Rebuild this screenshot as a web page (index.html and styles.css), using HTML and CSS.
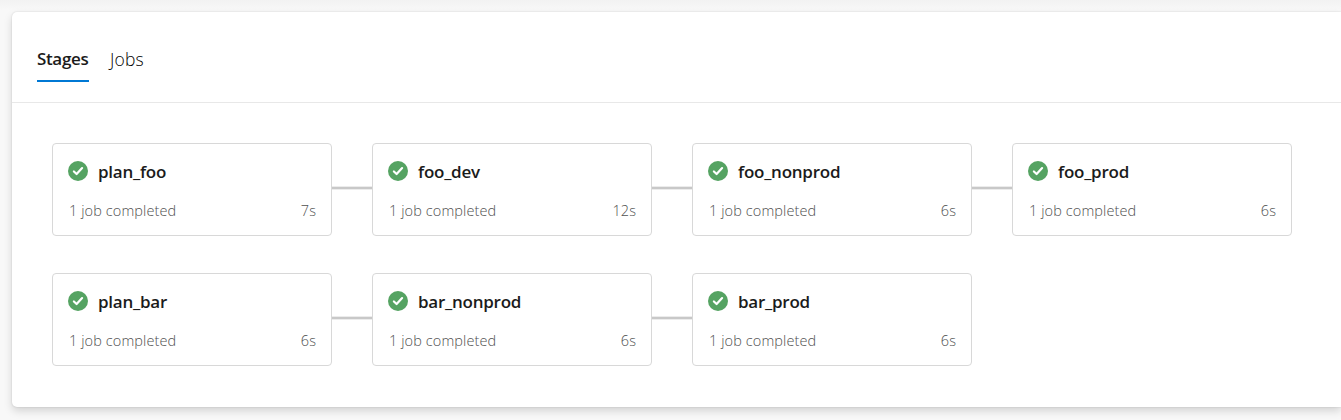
FILE: index.html
```html
<!DOCTYPE html>
<html lang="en">
<head>
<meta charset="utf-8">
<title>Pipeline stages</title>
<link rel="stylesheet" href="styles.css">
</head>
<body>
<svg class="symbols" width="0" height="0" aria-hidden="true">
  <symbol id="success" viewBox="0 0 20 20">
    <circle cx="10" cy="10" r="10" fill="#55a362"/>
    <path d="M5.9 10.5 8.6 13 14.1 7.1" fill="none" stroke="#fff" stroke-width="2.2" stroke-linecap="round" stroke-linejoin="round"/>
  </symbol>
</svg>
<main class="panel">
  <nav class="tabs">
    <a class="tab tab-active"><span>Stages</span></a>
    <a class="tab"><span>Jobs</span></a>
  </nav>
  <section class="graph">
    <div class="row">
      <article class="stage"><h2 class="stage-name"><svg class="icon"><use href="#success"/></svg><span>plan_foo</span></h2><div class="meta"><span>1 job completed</span><span>7s</span></div></article>
      <div class="link"></div>
      <article class="stage"><h2 class="stage-name"><svg class="icon"><use href="#success"/></svg><span>foo_dev</span></h2><div class="meta"><span>1 job completed</span><span>12s</span></div></article>
      <div class="link"></div>
      <article class="stage"><h2 class="stage-name"><svg class="icon"><use href="#success"/></svg><span>foo_nonprod</span></h2><div class="meta"><span>1 job completed</span><span>6s</span></div></article>
      <div class="link"></div>
      <article class="stage"><h2 class="stage-name"><svg class="icon"><use href="#success"/></svg><span>foo_prod</span></h2><div class="meta"><span>1 job completed</span><span>6s</span></div></article>
    </div>
    <div class="row">
      <article class="stage"><h2 class="stage-name"><svg class="icon"><use href="#success"/></svg><span>plan_bar</span></h2><div class="meta"><span>1 job completed</span><span>6s</span></div></article>
      <div class="link"></div>
      <article class="stage"><h2 class="stage-name"><svg class="icon"><use href="#success"/></svg><span>bar_nonprod</span></h2><div class="meta"><span>1 job completed</span><span>6s</span></div></article>
      <div class="link"></div>
      <article class="stage"><h2 class="stage-name"><svg class="icon"><use href="#success"/></svg><span>bar_prod</span></h2><div class="meta"><span>1 job completed</span><span>6s</span></div></article>
    </div>
  </section>
</main>
</body>
</html>
```
FILE: styles.css
```css
* { box-sizing: border-box; }
body {
  margin: 0;
  height: 420px;
  padding-top: 12px;
  overflow: hidden;
  background: linear-gradient(#f2f2f2, #f8f8f8 10px);
  font-family: "Segoe UI", "Open Sans", "Noto Sans", sans-serif;
  color: #1b1b1b;
}
.symbols { display: none; }
.panel {
  height: 395px;
  margin-left: 12px;
  background: #fff;
  border-radius: 5px 0 0 5px;
  box-shadow: 0 4px 9px rgba(0, 0, 0, .15), 0 0 2px rgba(0, 0, 0, .14);
}
.tabs {
  display: flex;
  gap: 21px;
  height: 91px;
  padding: 30px 25px 0;
  border-bottom: 1px solid #e8e8e8;
}
.tab {
  height: 40px;
  font-size: 17.5px;
  font-weight: 300;
  line-height: 34px;
  letter-spacing: .15px;
  white-space: nowrap;
  color: #000;
}
.tab-active {
  width: 52px;
  border-bottom: 2px solid #0078d4;
  font-size: 17px;
  font-weight: 600;
  letter-spacing: -.35px;
  color: #1b1b1b;
}
.graph {
  display: flex;
  flex-direction: column;
  gap: 37px;
  padding: 40px;
}
.row { display: flex; }
.stage {
  flex: none;
  width: 280px;
  height: 93px;
  padding: 15px 15px 0;
  border: 1px solid #d8d8d8;
  border-radius: 4px;
}
.stage-name {
  display: flex;
  align-items: center;
  gap: 10px;
  height: 26px;
  margin: 0;
  font-size: 17px;
  font-weight: 600;
  line-height: 26px;
  letter-spacing: -.25px;
  color: #1b1b1b;
}
.icon { flex: none; width: 20px; height: 20px; margin-top: -2px; }
.meta {
  display: flex;
  justify-content: space-between;
  margin-top: 14px;
  padding-left: 1px;
  font-size: 14.5px;
  font-weight: 300;
  line-height: 24px;
  letter-spacing: .1px;
  color: #505050;
}
.link {
  width: 40px;
  height: 4px;
  margin-top: 43px;
  background: #c8c8c8;
  border: solid #ececec;
  border-width: 1px 0;
}
```
